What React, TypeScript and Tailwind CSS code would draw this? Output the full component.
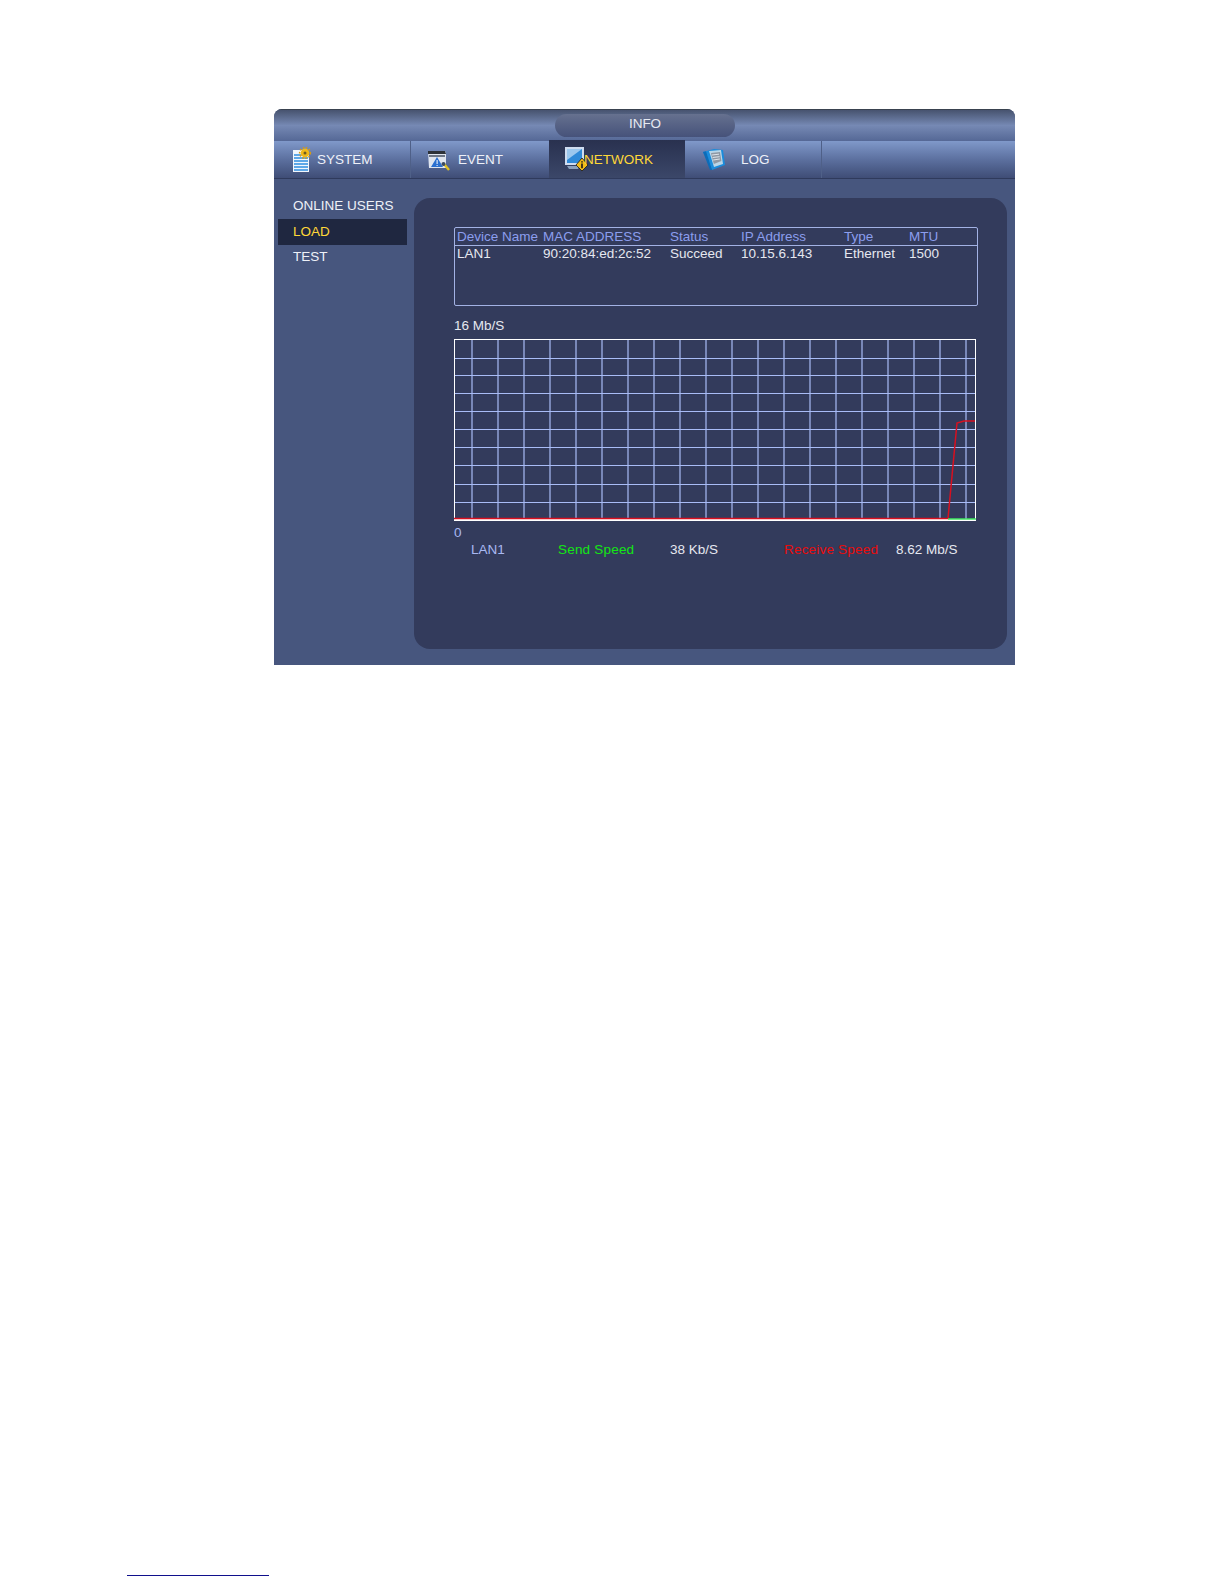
import React from 'react';

const columns = ['Device Name', 'MAC ADDRESS', 'Status', 'IP Address', 'Type', 'MTU'];
const row = ['LAN1', '90:20:84:ed:2c:52', 'Succeed', '10.15.6.143', 'Ethernet', '1500'];

const verticals = Array.from({ length: 20 }, (_, i) => 18 + i * 26);
const horizontals = [19.5, 36.5, 54.5, 72.5, 90.5, 108.5, 126.5, 145.5, 163.5];

const SystemIcon = () => (
  <svg width="20" height="26" viewBox="0 0 20 26">
    <path d="M1 3h12l4 3v19H1z" fill="#f2f6fc" />
    <path d="M2 8h14M2 11h14M2 14h14M2 17h14M2 20h14M2 23h14" stroke="#2f8fe0" strokeWidth="1.6" />
    <circle cx="13" cy="6" r="4.4" fill="#f0b818" />
    <circle cx="13" cy="6" r="5.4" fill="none" stroke="#d89a10" strokeWidth="1.4" strokeDasharray="1.6 1.6" />
    <circle cx="13" cy="6" r="1.5" fill="#6b5a20" />
  </svg>
);

const EventIcon = () => (
  <svg width="24" height="24" viewBox="0 0 24 24">
    <path d="M1 3h17l1 2v15H2z" fill="#dfe5ef" />
    <path d="M1 3h17l1 3H1z" fill="#2c3138" />
    <path d="M2 7h16v2H2z" fill="#6d7686" />
    <path d="M10 9l6 10H4z" fill="#2a6fd0" />
    <path d="M9.6 12h1v4h-1zM9.6 17h1v1h-1z" fill="#fff" />
    <path d="M17 16l5 6" stroke="#e0c020" strokeWidth="2.4" />
    <circle cx="16.5" cy="16" r="2" fill="#3a4a60" />
  </svg>
);

const NetworkIcon = () => (
  <svg width="25" height="26" viewBox="0 0 25 26">
    <path d="M1 1h19v18H1z" fill="#cfdcf0" />
    <path d="M3 3h15v14H3z" fill="#2f8ad8" />
    <path d="M3 3h15L3 14z" fill="#9cc8ee" />
    <path d="M3 20h13l-2 3H5z" fill="#8ba0bc" />
    <path d="M18 12l6 7-6 6-6-6z" fill="#f2bb16" stroke="#17171a" strokeWidth="0.8" />
    <path d="M17.2 15.2h1.6v1.4h-1.6zM17.2 17.4h1.6v4.8h-1.6z" fill="#17171a" />
  </svg>
);

const LogIcon = () => (
  <svg width="24" height="24" viewBox="0 0 24 24">
    <path d="M1 4l11-3 9 1 2 15-13 5z" fill="#1a8cdc" />
    <path d="M7 3l12-1 2 14-9 3z" fill="#b9d6e8" />
    <path d="M9 5l9-1 1.4 9-7.6 3z" fill="#8e98a4" />
    <path d="M10 7l7-.8M10.6 9.5l7-.8M11.2 12l6.6-1" stroke="#e6ecf2" strokeWidth="0.9" />
    <path d="M1 4l7 18 2 0L4 3.2z" fill="#0c6cb8" />
  </svg>
);

const App = () => {
  return (
    <div className="w-[1224px] min-h-[1584px] bg-white pt-[109px] font-['Liberation_Sans',Arial,sans-serif] text-[13.5px]">
      <div className="ml-[274px] w-[741px] h-[556px] flex flex-col rounded-t-[8px] overflow-hidden bg-[#47567e]">
        {/* Title bar */}
        <div className="h-[32px] flex items-center pl-[281px] border-t border-[#39424f] bg-gradient-to-b from-[#47536f] via-[#7689b4] to-[#556896]">
          <div className="w-[180px] h-[23px] pb-[3px] rounded-full bg-gradient-to-b from-[#66718f] to-[#46527a] flex items-center justify-center text-[#e6e9f2]">
            INFO
          </div>
        </div>

        {/* Tabs */}
        <div className="h-[38px] flex border-b border-[#2f3a5c] bg-gradient-to-b from-[#8099ca] via-[#5c709f] to-[#3f4d76] text-[#eef1f8]">
          <div className="w-[137px] flex items-center pl-[18px] gap-[5px] border-r border-[#4f6088]">
            <SystemIcon />
            <span className="pt-[2px]">SYSTEM</span>
          </div>
          <div className="w-[138px] flex items-center pl-[16px] gap-[7px]">
            <EventIcon />
            <span className="pt-[2px]">EVENT</span>
          </div>
          <div className="w-[136px] -mt-[1px] flex items-center pl-[15px] bg-gradient-to-b from-[#29314f] to-[#3b4769] text-[#ffd838]">
            <NetworkIcon />
            <span className="-ml-[5px] pt-[2px]">NETWORK</span>
          </div>
          <div className="w-[137px] flex items-center pl-[17px] gap-[15px] border-r border-[#4f6088]">
            <LogIcon />
            <span className="pt-[2px]">LOG</span>
          </div>
        </div>

        {/* Body */}
        <div className="flex-1 flex">
          <div className="w-[140px] pl-[4px] pt-[13px] flex flex-col text-[#eef1f8]">
            <div className="h-[26px] pt-[2px] pl-[15px] flex items-center">ONLINE USERS</div>
            <div className="h-[26px] mt-[1px] pl-[15px] flex items-center w-[129px] bg-[#1f2740] text-[#ffd838]">LOAD</div>
            <div className="h-[23px] pt-[2px] pl-[15px] flex items-center">TEST</div>
          </div>

          <div className="w-[593px] mt-[19px] mb-[16px] rounded-[16px] bg-[#333b5c] pl-[40px] pt-[29px]">
            <div className="w-[524px] h-[79px] border border-[#a3b2e4] rounded-[2px]">
              <div className="h-[18px] pl-[2px] leading-[17px] grid grid-cols-[86px_127px_71px_103px_65px_1fr] items-start border-b border-[#a3b2e4] text-[#8c9eee]">
                {columns.map((c) => (
                  <span key={c} className="whitespace-nowrap">{c}</span>
                ))}
              </div>
              <div className="h-[18px] pl-[2px] leading-[16px] grid grid-cols-[86px_127px_71px_103px_65px_1fr] items-start text-[#e6e8f0]">
                {row.map((c) => (
                  <span key={c} className="whitespace-nowrap">{c}</span>
                ))}
              </div>
            </div>

            <div className="mt-[9px] h-[20px] pt-[2px] flex items-center text-[#e6e8f0]">16 Mb/S</div>

            <svg className="mt-[4px] block" width="522" height="182" viewBox="0 0 522 182">
              {verticals.map((x) => (
                <line key={x} x1={x} x2={x} y1="0" y2="181" stroke="#a9bcf6" strokeWidth="1.2" />
              ))}
              {horizontals.map((y) => (
                <line key={y} x1="0" x2="521" y1={y} y2={y} stroke="#a9bcf6" strokeWidth="1.2" />
              ))}
              <rect x="0.5" y="0.5" width="521" height="180" fill="none" stroke="#ffffff" strokeWidth="1" />
              <line x1="0" x2="522" y1="181" y2="181" stroke="#ffffff" strokeWidth="2" />
              <polyline points="0,179.5 494,179.5 503,84 510,82 521,82" fill="none" stroke="#d81020" strokeWidth="1.5" />
              <line x1="494" x2="522" y1="180" y2="180" stroke="#3fe860" strokeWidth="1.5" />
            </svg>

            <div className="mt-[3px] h-[16px] pt-[2px] flex items-center text-[#a9b8f2]">0</div>
            <div className="h-[20px] pl-[17px] grid grid-cols-[87px_112px_114px_112px_1fr] items-center">
              <span className="text-[#a9b8f2]">LAN1</span>
              <span className="text-[#14e614] tracking-[0.2px]">Send Speed</span>
              <span className="text-[#e6e8f0]">38 Kb/S</span>
              <span className="text-[#e80c0c] tracking-[0.2px]">Receive Speed</span>
              <span className="text-[#e6e8f0]">8.62 Mb/S</span>
            </div>
          </div>
        </div>
      </div>

      {/* link underline at the page foot */}
      <div className="ml-[127px] mt-[910px] w-[142px] h-[1px] bg-[#10108c]" />
    </div>
  );
};

export default App;
